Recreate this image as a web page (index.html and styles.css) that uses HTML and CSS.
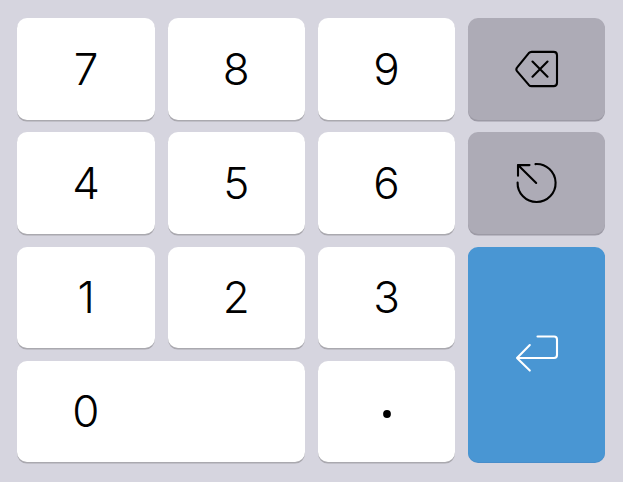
FILE: index.html
```html
<!DOCTYPE html>
<html lang="en">
<head>
<meta charset="utf-8">
<title>Keypad</title>
<link rel="stylesheet" href="styles.css">
</head>
<body>
<main class="keypad">
  <button class="key">7</button>
  <button class="key">8</button>
  <button class="key">9</button>
  <button class="key key-muted" aria-label="Delete">
    <svg class="icon" viewBox="0 0 44 44"><path d="M16.6 4.9H38.6Q42 4.9 42 8.3V35.7Q42 39.1 38.6 39.1H16.6Q15 39.1 13.8 37.9L2.2 24.4Q0.5 22.4 2.2 20.4L13.8 6.1Q15 4.9 16.6 4.9ZM17.5 14.5L32.5 29.7M32.5 14.5L17.5 29.7"/></svg>
  </button>
  <button class="key">4</button>
  <button class="key">5</button>
  <button class="key">6</button>
  <button class="key key-muted" aria-label="Reset">
    <svg class="icon" viewBox="0 0 44 44"><path d="M20.5 3.1A19 19 0 1 1 2.6 21.5M3 14.8V4.1H14.5M3 4.1L21.2 22"/></svg>
  </button>
  <button class="key">1</button>
  <button class="key">2</button>
  <button class="key">3</button>
  <button class="key key-enter" aria-label="Enter">
    <svg class="icon" viewBox="0 0 44 44"><path d="M22.5 4.5H39.1Q42 4.5 42 7.4V23Q42 26 39 26H2M14.8 13L2 26L14.8 38.6"/></svg>
  </button>
  <button class="key key-zero"><span class="zero">0</span></button>
  <button class="key" aria-label="Decimal point"><svg class="dot" viewBox="0 0 8 8"><circle cx="4" cy="4" r="3.9"/></svg></button>
</main>
</body>
</html>
```
FILE: styles.css
```css
* {
  box-sizing: border-box;
}

body {
  margin: 0;
  background: #d6d5df;
  font-family: Inter, "Liberation Sans", sans-serif;
}

.keypad {
  display: grid;
  grid-template-columns: repeat(4, 1fr);
  grid-template-rows: repeat(4, 1fr);
  gap: 12.8px;
  width: 623px;
  height: 482px;
  padding: 18.4px 17.6px 20px 17.4px;
}

.key {
  display: flex;
  align-items: center;
  justify-content: center;
  min-width: 0;
  min-height: 0;
  padding: 0;
  border: 0;
  border-radius: 10px;
  background: #fff;
  box-shadow: 0 1.6px 0 #aaa9af;
  color: #000;
  font: inherit;
  font-size: 44px;
  font-weight: 300;
  line-height: 1;
}

.key-muted {
  background: #adabb6;
  box-shadow: 0 1.6px 0 #9c9aa5;
}

.key-enter {
  grid-row: span 2;
  background: #4996d3;
  box-shadow: 0 1px 0 #478dca;
  color: #fff;
}

.key-zero {
  grid-column: span 2;
  justify-content: flex-start;
}

.zero {
  width: 137px;
  text-align: center;
}

.icon {
  width: 44px;
  height: 44px;
  fill: none;
  stroke: currentColor;
  stroke-width: 2.1;
  stroke-linecap: round;
  stroke-linejoin: round;
}

.dot {
  width: 8px;
  height: 8px;
  margin-top: 6px;
  fill: currentColor;
}
```
